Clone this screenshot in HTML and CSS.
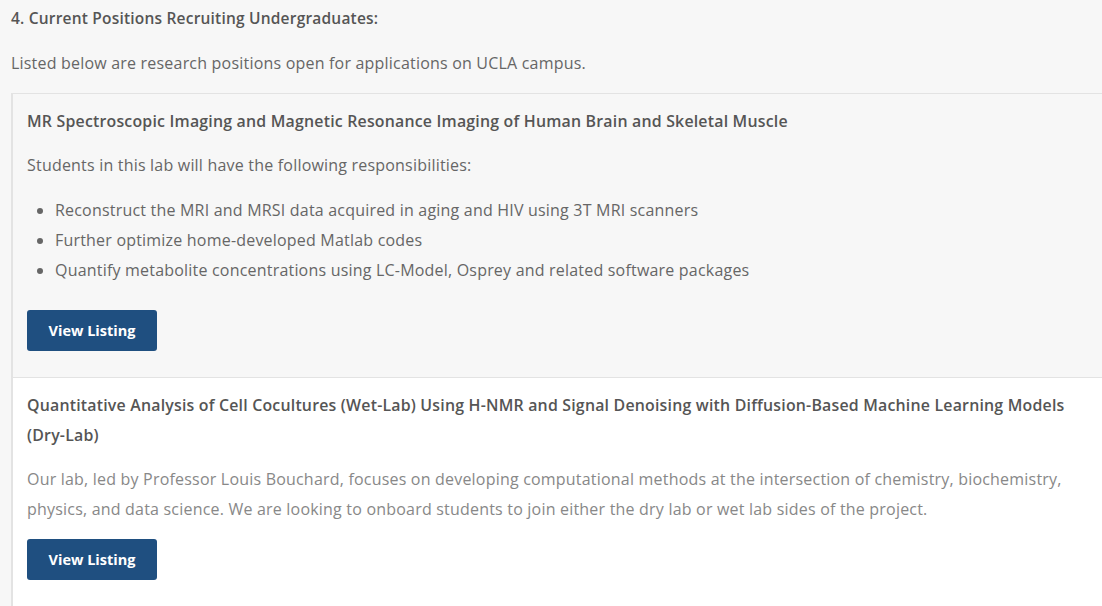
FILE: index.html
```html
<!DOCTYPE html>
<html lang="en">
<head>
<meta charset="utf-8">
<title>Current Positions</title>
<link rel="stylesheet" href="styles.css">
</head>
<body>
<div class="page">
  <h4 class="section-title">4. Current Positions Recruiting Undergraduates:</h4>
  <p class="intro">Listed below are research positions open for applications on UCLA campus.</p>
  <div class="listings">
    <div class="listing listing-shaded">
      <h5 class="listing-title">MR Spectroscopic Imaging and Magnetic Resonance Imaging of Human Brain and Skeletal Muscle</h5>
      <p class="listing-text">Students in this lab will have the following responsibilities:</p>
      <ul class="listing-list">
        <li>Reconstruct the MRI and MRSI data acquired in aging and HIV using 3T MRI scanners</li>
        <li>Further optimize home-developed Matlab codes</li>
        <li>Quantify metabolite concentrations using LC-Model, Osprey and related software packages</li>
      </ul>
      <a class="btn" href="#">View Listing</a>
    </div>
    <div class="listing listing-plain">
      <h5 class="listing-title">Quantitative Analysis of Cell Cocultures (Wet-Lab) Using H-NMR and Signal Denoising with Diffusion-Based Machine Learning Models <span class="nowrap">(Dry-Lab)</span></h5>
      <p class="listing-desc">Our lab, led by Professor Louis Bouchard, focuses on developing computational methods at the intersection of chemistry, biochemistry, physics, and data science. We are looking to onboard students to join either the dry lab or wet lab sides of the project.</p>
      <a class="btn" href="#">View Listing</a>
    </div>
  </div>
</div>
</body>
</html>
```

FILE: styles.css
```css
html, body {
  margin: 0;
  padding: 0;
  background: #f7f7f7;
  height: 100%;
  overflow: hidden;
}
body {
  font-family: "Open Sans", "Liberation Sans", sans-serif;
  font-size: 16px;
  letter-spacing: 0.2px;
  line-height: 30px;
  color: #666;
}
.page {
  padding: 3px 0 0 11px;
  height: 100%;
  box-sizing: border-box;
  display: flex;
  flex-direction: column;
}
.section-title {
  margin: 0 0 15px;
  font-size: 15.5px;
  font-weight: 600;
  color: #555;
}
.intro {
  margin: 0 0 15px;
}
.listings {
  border-left: 2px solid #e3e3e3;
  flex: 1;
  display: flex;
  flex-direction: column;
}
.listing {
  border-top: 1px solid #e3e3e3;
  padding: 12px 15px 26px 14px;
}
.listing-shaded { background: #f7f7f7; }
.listing-plain { background: #fff; flex: 1; }
.listing-title {
  margin: 0 0 14px;
  font-size: 15.9px;
  font-weight: 600;
  color: #555;
}
.nowrap { white-space: nowrap; }
.listing-text { margin: 0 0 15px; }
.listing-list {
  margin: 0 0 25px;
  padding-left: 28px;
}
.listing-desc {
  margin: 0 0 15px;
  color: #888;
}
.btn {
  display: inline-block;
  width: 130px;
  height: 41px;
  line-height: 41px;
  text-align: center;
  box-sizing: border-box;
  background: #1f4f80;
  color: #fff;
  font-weight: 700;
  font-size: 14.5px;
  letter-spacing: 0;
  text-decoration: none;
  border-radius: 3px;
  vertical-align: top;
}
```
